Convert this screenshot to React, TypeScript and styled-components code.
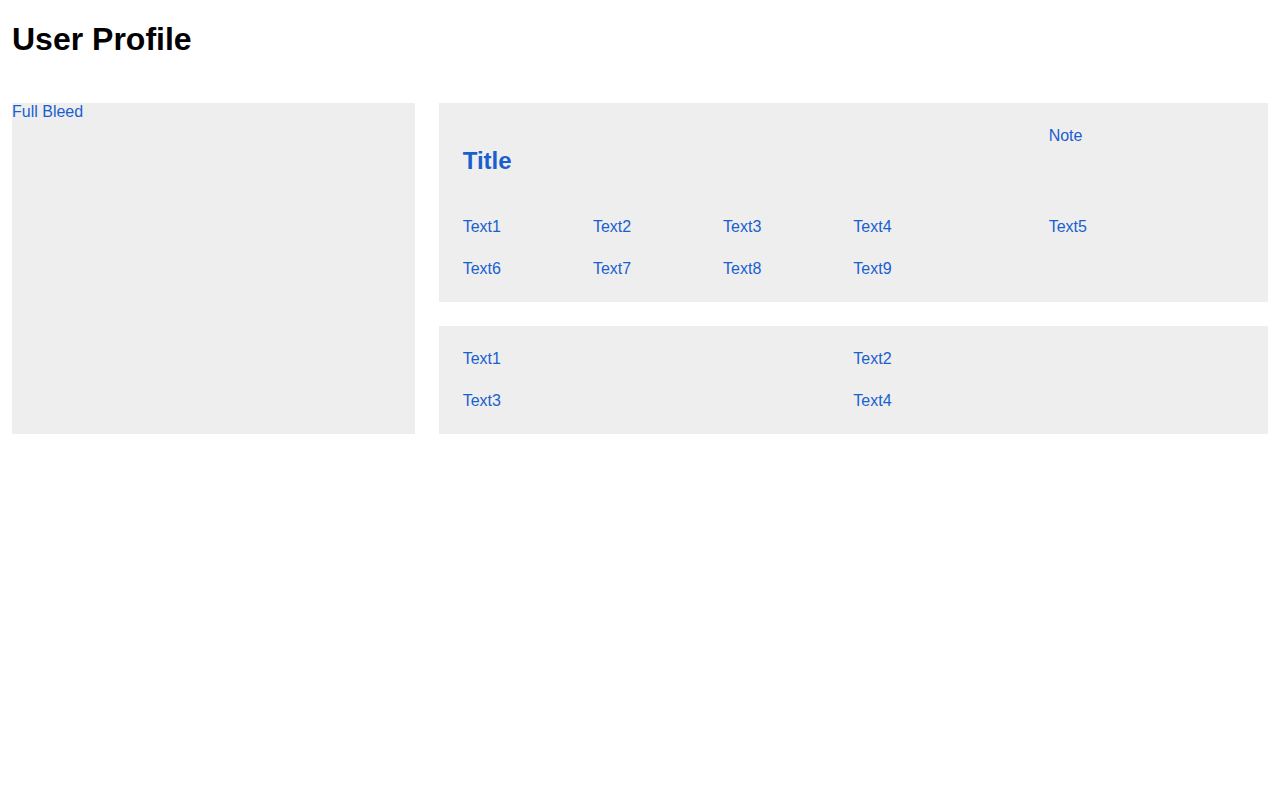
import styled, { createGlobalStyle } from 'styled-components';
import React from 'react';

const GlobalStyle = createGlobalStyle`
    html, body {
        margin: 0;
        padding: 0;
        background: #ffffff;
        font-family: "Liberation Sans", Arial, Helvetica, sans-serif;
    }
`;

const detailCells = ['Text1', 'Text2', 'Text3', 'Text4', 'Text5', 'Text6', 'Text7', 'Text8', 'Text9'];
const summaryCells = ['Text1', 'Text2', 'Text3', 'Text4'];

export default function App() {
    return (
        <>
            <GlobalStyle/>
            <Page>
                <Heading>User Profile</Heading>
                <Layout>
                    <FullBleed>
                        <Label>Full Bleed</Label>
                    </FullBleed>
                    <Column>
                        <Card>
                            <DetailGrid>
                                <Title>Title</Title>
                                <Note>Note</Note>
                                {detailCells.map((t, i) => <Label key={i}>{t}</Label>)}
                            </DetailGrid>
                        </Card>
                        <Card>
                            <SummaryGrid>
                                {summaryCells.map((t, i) => <Label key={i}>{t}</Label>)}
                            </SummaryGrid>
                        </Card>
                    </Column>
                </Layout>
            </Page>
        </>
    )
}

const Page = styled.div`
    padding: 12px;
`;

const Heading = styled.h1`
    margin: 9px 0 45px;
    font-size: 32px;
    line-height: 37px;
    font-weight: bold;
    color: #000000;
`;

const Layout = styled.div`
    display: grid;
    grid-template-columns: repeat(12, 1fr);
    column-gap: 24px;
`;

const FullBleed = styled.div`
    grid-column: span 4;
    background-color: #eeeeee;
`;

const Column = styled.div`
    grid-column: span 8;
    display: flex;
    flex-direction: column;
    gap: 24px;
`;

const Card = styled.div`
    background-color: #eeeeee;
    padding: 24px;
`;

const Label = styled.div`
    font-size: 16px;
    line-height: 18px;
    color: #1a5fcf;
`;

const DetailGrid = styled.div`
    display: grid;
    grid-template-columns: 2fr 2fr 2fr 3fr 3fr;
    grid-template-rows: 67px auto auto;
    row-gap: 24px;
`;

const Title = styled.h2`
    grid-column: 1 / 5;
    align-self: center;
    margin: 0;
    font-size: 24px;
    line-height: 28px;
    font-weight: bold;
    color: #1a5fcf;
`;

const Note = styled(Label)`
    grid-column: 5;
    align-self: start;
`;

const SummaryGrid = styled.div`
    display: grid;
    grid-template-columns: 1fr 1fr;
    row-gap: 24px;
`;
